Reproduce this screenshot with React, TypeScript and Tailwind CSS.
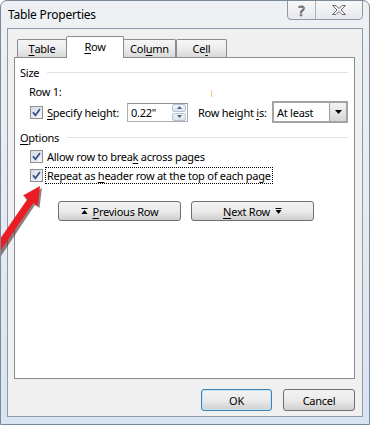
import React from "react";

const Check = () => (
  <span className="w-[13px] h-[13px] shrink-0 border border-[#8e8f8f] bg-gradient-to-br from-[#d4dbe6] to-[#f7f8fa] flex items-center justify-center">
    <svg width="11" height="11" viewBox="0 0 11 11">
      <path d="M2 5.2 L4.4 8.3 L9 2" fill="none" stroke="#3d4f8f" strokeWidth="1.8" />
    </svg>
  </span>
);

const U = ({ children }: { children: React.ReactNode }) => (
  <span className="underline underline-offset-2">{children}</span>
);

const Btn = ({
  children,
  className = "",
}: {
  children: React.ReactNode;
  className?: string;
}) => (
  <button
    className={
      "flex items-center justify-center rounded-[3px] border border-[#707070] bg-gradient-to-b from-[#f2f2f2] via-[#ebebeb] to-[#cfcfcf] text-[11px] text-black " +
      className
    }
  >
    {children}
  </button>
);

const Tab = ({
  label,
  width,
  selected,
}: {
  label: React.ReactNode;
  width: string;
  selected?: boolean;
}) =>
  selected ? (
    <div
      className={`${width} h-[22px] -mb-px relative z-10 -mx-[1px] flex items-center justify-center border border-b-0 border-[#898c95] rounded-t-[2px] bg-white pb-[2px]`}
    >
      {label}
    </div>
  ) : (
    <div
      className={`${width} h-[18px] flex items-center justify-center border border-[#898c95] border-b-0 rounded-t-[2px] bg-gradient-to-b from-[#f6f6f6] via-[#ececec] to-[#d9d9d9]`}
    >
      {label}
    </div>
  );

export default function App() {
  return (
    <div className="relative w-[370px] h-[425px] overflow-hidden whitespace-nowrap rounded-t-[7px] border border-[#7b8896] bg-gradient-to-b from-[#eef1f4] via-[#e4ebf2] to-[#d7e4f1] font-['Noto_Sans',sans-serif] text-[11px] leading-[15px] tracking-[-0.25px] text-black">
      {/* TITLE BAR */}
      <div className="h-[27px] flex items-start justify-between">
        <div className="pl-[7px] pt-[6px] text-[12px] tracking-[-0.2px] text-black">Table Properties</div>
        <div className="flex h-[20px] -mt-px mr-[6px] border border-[#8d98a4] rounded-b-[4px] bg-gradient-to-b from-[#f7f8f9] to-[#e6e9ed] overflow-hidden">
          <div className="w-[28px] flex items-center justify-center border-r border-[#a9b2bc] text-[14px] text-[#f4f4f4] [-webkit-text-stroke:0.8px_#5a5a5a]">
            ?
          </div>
          <div className="w-[46px] flex items-center justify-center">
            <svg width="16" height="12" viewBox="0 0 16 12">
              <path
                d="M1.5 1.5 H5 L8 4.5 L11 1.5 H14.5 L10 6 L14.5 10.5 H11 L8 7.5 L5 10.5 H1.5 L6 6 Z"
                fill="#f4f4f4"
                stroke="#6a6a6a"
                strokeWidth="1"
              />
            </svg>
          </div>
        </div>
      </div>

      {/* CLIENT AREA */}
      <div className="ml-[6px] w-[356px] h-[389px] border border-[#8f9aa6] bg-[#f0f0f0] pt-[7px] pl-[6px] pr-[6px]">
        {/* TABS */}
        <div className="flex items-end ml-[3px] h-[21px]">
          <Tab width="w-[50px]" label={<><U>T</U>able</>} />
          <Tab width="w-[58px]" selected label={<><U>R</U>ow</>} />
          <Tab width="w-[53px]" label={<>Col<U>u</U>mn</>} />
          <Tab width="w-[51px]" label={<>Ce<U>l</U>l</>} />
        </div>

        {/* PANEL */}
        <div className="relative w-[341px] h-[322px] border border-[#898c95] bg-white pl-[5px] pr-[6px]">
          {/* SIZE */}
          <div className="mt-[7px] flex items-center h-[15px]">
            <span>Size</span>
            <div className="ml-[8px] flex-1 h-px bg-[#dfe2e6]" />
          </div>
          <div className="mt-[4px] ml-[9px] h-[15px]">Row 1:</div>
          <span className="absolute left-[196px] top-[32px] w-px h-[7px] bg-[#f5c36b]" />
          <div className="mt-[2px] flex items-center h-[22px]">
            <div className="ml-[10px]">
              <Check />
            </div>
            <span className="ml-[4px]">
              <U>S</U>pecify height:
            </span>
            <div className="ml-auto flex items-center w-[61px] h-[19px] border border-[#abadb3] border-t-[#8e9094] bg-white">
              <span className="pl-[3px] flex-1">0.22"</span>
              <div className="w-[14px] h-[17px] mr-px flex flex-col gap-px">
                <div className="flex-1 flex items-center justify-center rounded-[2px] border border-[#b7c3d1] bg-gradient-to-b from-[#f2f5f9] to-[#dbe3ec]">
                  <svg width="5" height="3" viewBox="0 0 5 3">
                    <path d="M0 3 L2.5 0 L5 3 Z" fill="#4d6185" />
                  </svg>
                </div>
                <div className="flex-1 flex items-center justify-center rounded-[2px] border border-[#b7c3d1] bg-gradient-to-b from-[#f2f5f9] to-[#dbe3ec]">
                  <svg width="5" height="3" viewBox="0 0 5 3">
                    <path d="M0 0 L2.5 3 L5 0 Z" fill="#4d6185" />
                  </svg>
                </div>
              </div>
            </div>
            <span className="ml-[10px] w-[74px]">
              Row height <U>i</U>s:
            </span>
            <div className="flex items-center w-[76px] h-[22px] border-2 border-[#a3a3a3] bg-white">
              <span className="pl-[3px] flex-1">At least</span>
              <div className="w-[17px] h-[18px] flex items-center justify-center border-l border-[#9c9c9c] bg-gradient-to-b from-[#f3f3f3] to-[#d6d6d6]">
                <svg width="7" height="4" viewBox="0 0 7 4">
                  <path d="M0 0 H7 L3.5 4 Z" fill="#000" />
                </svg>
              </div>
            </div>
          </div>

          {/* OPTIONS */}
          <div className="mt-[7px] flex items-center h-[15px]">
            <span>
              <U>O</U>ptions
            </span>
            <div className="ml-[8px] flex-1 h-px bg-[#dfe2e6]" />
          </div>
          <div className="mt-[4px] ml-[10px] flex items-center gap-[4px] h-[15px]">
            <Check />
            <span>
              Allow row to brea<U>k</U> across pages
            </span>
          </div>
          <div className="mt-[4px] ml-[10px] flex items-center gap-[2px] h-[15px]">
            <Check />
            <span className="border border-dotted border-black px-px">
              Repeat as <U>h</U>eader row at the top of each page
            </span>
          </div>

          {/* ROW NAV */}
          <div className="mt-[18px] ml-[38px] flex gap-[10px]">
            <Btn className="w-[123px] h-[20px] gap-[5px]">
              <svg width="7" height="7" viewBox="0 0 7 7">
                <path d="M0.5 0.5 H6.5" stroke="#000" strokeWidth="1" />
                <path d="M3.5 2 L0.5 6 H6.5 Z" fill="#000" />
              </svg>
              <span>
                <U>P</U>revious Row
              </span>
            </Btn>
            <Btn className="w-[123px] h-[20px] gap-[5px]">
              <span>
                <U>N</U>ext Row
              </span>
              <svg width="7" height="7" viewBox="0 0 7 7">
                <path d="M0.5 0.5 H6.5" stroke="#000" strokeWidth="1" />
                <path d="M0.5 2 H6.5 L3.5 6 Z" fill="#000" />
              </svg>
            </Btn>
          </div>
        </div>

        {/* DIALOG BUTTONS */}
        <div className="mt-[10px] flex justify-end gap-[11px] pr-px">
          <Btn className="w-[71px] h-[22px] !border-[#3c7fb1] shadow-[inset_0_0_0_1px_#c6e4f8]">OK</Btn>
          <Btn className="w-[72px] h-[22px]">Cancel</Btn>
        </div>
      </div>

      {/* RED ARROW */}
      <svg
        className="absolute left-0 top-0 pointer-events-none"
        width="370"
        height="425"
        viewBox="0 0 370 425"
      >
        <polygon
          points="-6,251 28.5,201 23.5,197 41,187 38.5,207 34,204 0,255"
          fill="#3a1a1a"
          opacity="0.55"
        />
        <polygon
          points="-8,248 26.5,198 22,194.5 39,185 36.8,205 32.3,202 -2,252"
          fill="#ec1c24"
        />
      </svg>
    </div>
  );
}
